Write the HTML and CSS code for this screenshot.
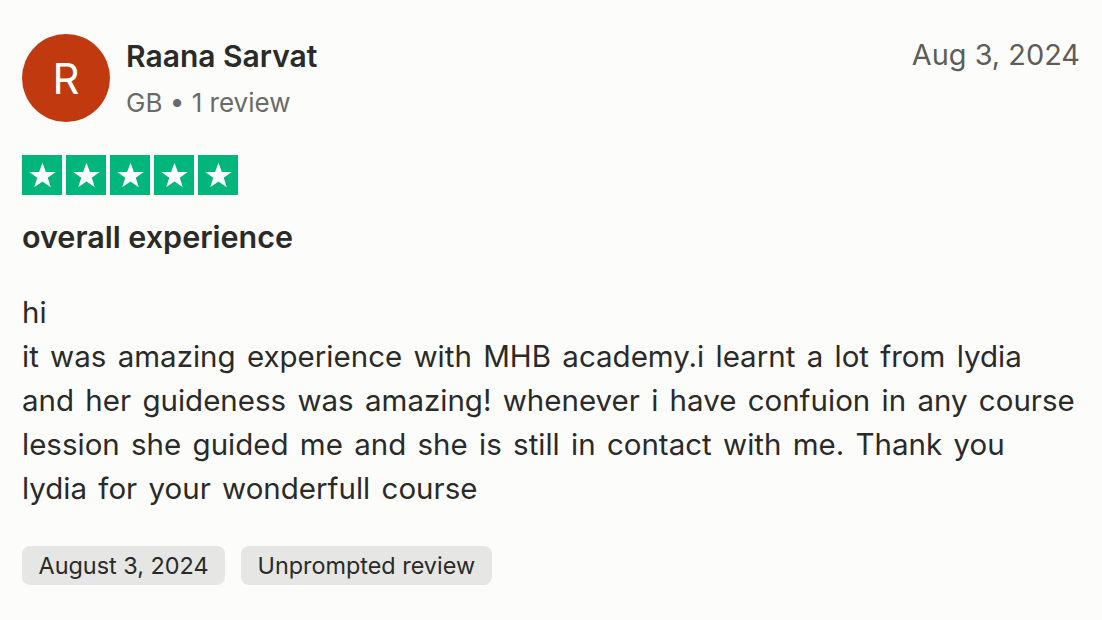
FILE: index.html
```html
<!DOCTYPE html>
<html lang="en">
<head>
<meta charset="utf-8">
<title>Review</title>
<link rel="stylesheet" href="styles.css">
</head>
<body>
<article class="review">
  <header class="review-header">
    <div class="consumer">
      <div class="avatar">R</div>
      <div class="consumer-info">
        <div class="name">Raana Sarvat</div>
        <div class="meta">GB • 1 review</div>
      </div>
    </div>
    <time class="date">Aug 3, 2024</time>
  </header>
  <div class="stars">
    <span class="star"><svg viewBox="0 0 24 24"><path d="M12 3.2l2.3 6.4h6.8l-5.5 4 2.1 6.5L12 16.1l-5.7 4 2.1-6.5-5.5-4h6.8z" fill="#fff"/></svg></span>
    <span class="star"><svg viewBox="0 0 24 24"><path d="M12 3.2l2.3 6.4h6.8l-5.5 4 2.1 6.5L12 16.1l-5.7 4 2.1-6.5-5.5-4h6.8z" fill="#fff"/></svg></span>
    <span class="star"><svg viewBox="0 0 24 24"><path d="M12 3.2l2.3 6.4h6.8l-5.5 4 2.1 6.5L12 16.1l-5.7 4 2.1-6.5-5.5-4h6.8z" fill="#fff"/></svg></span>
    <span class="star"><svg viewBox="0 0 24 24"><path d="M12 3.2l2.3 6.4h6.8l-5.5 4 2.1 6.5L12 16.1l-5.7 4 2.1-6.5-5.5-4h6.8z" fill="#fff"/></svg></span>
    <span class="star"><svg viewBox="0 0 24 24"><path d="M12 3.2l2.3 6.4h6.8l-5.5 4 2.1 6.5L12 16.1l-5.7 4 2.1-6.5-5.5-4h6.8z" fill="#fff"/></svg></span>
  </div>
  <h2 class="title">overall experience</h2>
  <p class="body">hi
it was amazing experience with MHB academy.i learnt a lot from lydia and her guideness was amazing! whenever i have confuion in any course lession she guided me and she is still in contact with me. Thank you lydia for your wonderfull course</p>
  <div class="tags">
    <span class="tag">August 3, 2024</span>
    <span class="tag">Unprompted review</span>
  </div>
</article>
</body>
</html>
```
FILE: styles.css
```css
* { box-sizing: border-box; }
html, body { margin: 0; padding: 0; }
body {
  background: #fcfcfb;
  font-family: Inter, "Liberation Sans", sans-serif;
  color: #2a2a28;
}
.review {
  padding: 34px 22px 0 22px;
}
.review-header {
  display: flex;
  justify-content: space-between;
  align-items: flex-start;
}
.consumer {
  display: flex;
  align-items: center;
  gap: 16px;
}
.avatar {
  width: 88px;
  height: 88px;
  border-radius: 50%;
  background: #c0390f;
  color: #fff;
  display: flex;
  align-items: center;
  justify-content: center;
  font-size: 42px;
  font-weight: 400;
}
.consumer-info {
  display: flex;
  flex-direction: column;
  gap: 13px;
}
.name {
  font-size: 30px;
  line-height: 36px;
  font-weight: 600;
  color: #2a2a28;
}
.meta {
  font-size: 26px;
  line-height: 32px;
  color: #6a6a66;
}
.date {
  font-size: 28.9px;
  line-height: 36px;
  color: #5e5d59;
  margin-top: 3px;
}
.stars {
  display: flex;
  gap: 4px;
  margin-top: 33px;
}
.star {
  width: 40px;
  height: 40px;
  background: #00b67a;
  display: flex;
  align-items: center;
  justify-content: center;
}
.star svg { width: 35px; height: 35px; margin-top: 1px; }
.title {
  margin: 22px 0 0 0;
  font-size: 30.5px;
  font-weight: 600;
  line-height: 40px;
}
.body {
  white-space: pre-line;
  margin: 33px 0 0 0;
  font-size: 29.5px;
  word-spacing: 3px;
  line-height: 44px;
  width: 1056px;
}
.tags {
  display: flex;
  gap: 16px;
  margin-top: 36px;
}
.tag {
  background: #e6e6e4;
  border-radius: 8px;
  padding: 0 16.5px;
  height: 39px;
  line-height: 39px;
  font-size: 23.4px;
  color: #2a2a28;
}
```
